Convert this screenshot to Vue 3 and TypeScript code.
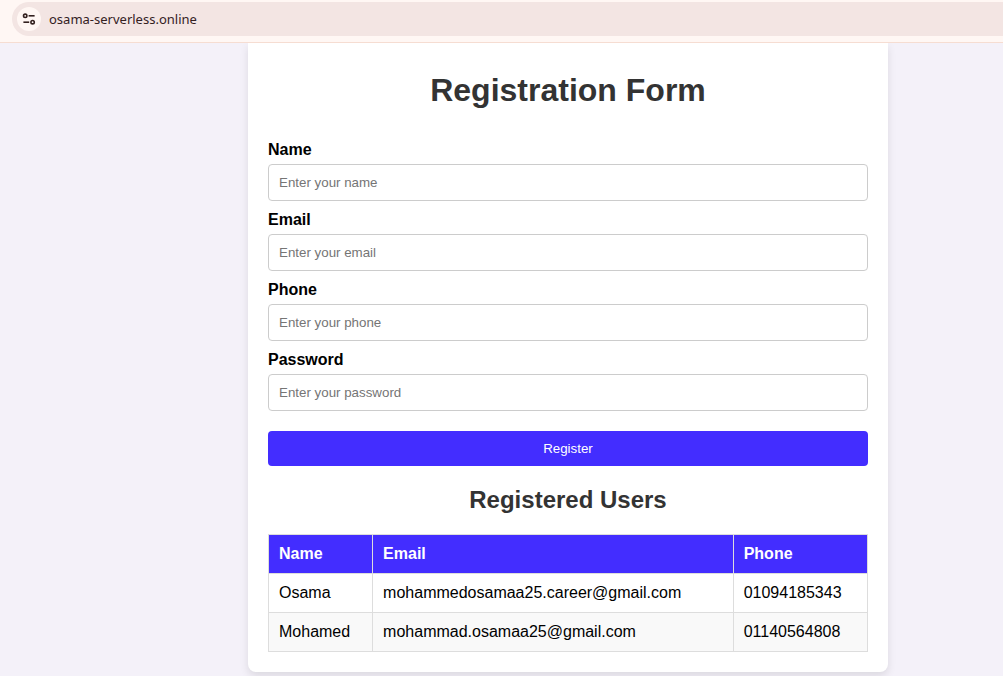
<script setup lang="ts">
import { reactive, ref } from 'vue'

type FieldKey = 'name' | 'email' | 'phone' | 'password'

interface Field {
  key: FieldKey
  label: string
  type: string
}

interface User {
  name: string
  email: string
  phone: string
}

const fields: Field[] = [
  { key: 'name', label: 'Name', type: 'text' },
  { key: 'email', label: 'Email', type: 'email' },
  { key: 'phone', label: 'Phone', type: 'tel' },
  { key: 'password', label: 'Password', type: 'password' },
]

const form = reactive<Record<FieldKey, string>>({ name: '', email: '', phone: '', password: '' })

const users = ref<User[]>([
  { name: 'Osama', email: 'mohammedosamaa25.career@gmail.com', phone: '01094185343' },
  { name: 'Mohamed', email: 'mohammad.osamaa25@gmail.com', phone: '01140564808' },
])

function register(): void {
  if (!form.name || !form.email) return
  users.value.push({ name: form.name, email: form.email, phone: form.phone })
  for (const field of fields) form[field.key] = ''
}
</script>

<template>
  <div class="window">
    <header class="toolbar">
      <div class="address">
        <button class="site-info" type="button" aria-label="View site information">
          <svg width="14" height="14" viewBox="0 0 14 14" fill="none" stroke="#33211f" stroke-width="1.6">
            <circle cx="3.2" cy="3.8" r="1.7" />
            <path d="M6.6 3.8H12.6" />
            <circle cx="10.6" cy="10.2" r="1.7" />
            <path d="M1.4 10.2H7.2" />
          </svg>
        </button>
        <span class="url">osama-serverless.online</span>
      </div>
    </header>

    <main class="page">
      <section class="card">
        <h1>Registration Form</h1>
        <form novalidate @submit.prevent="register">
          <div v-for="field in fields" :key="field.key" class="field">
            <label :for="field.key">{{ field.label }}</label>
            <input
              :id="field.key"
              v-model="form[field.key]"
              :type="field.type"
              :placeholder="`Enter your ${field.key}`"
            />
          </div>
          <button class="register" type="submit">Register</button>
        </form>

        <h2>Registered Users</h2>
        <table>
          <thead>
            <tr>
              <th scope="col">Name</th>
              <th scope="col">Email</th>
              <th scope="col">Phone</th>
            </tr>
          </thead>
          <tbody>
            <tr v-for="user in users" :key="user.email">
              <td>{{ user.name }}</td>
              <td>{{ user.email }}</td>
              <td>{{ user.phone }}</td>
            </tr>
          </tbody>
        </table>
      </section>
    </main>
  </div>
</template>

<style>
body {
  margin: 0;
  background: #f4f1f9;
}
</style>

<style scoped>
.window {
  display: flex;
  flex-direction: column;
  min-height: 100vh;
  font-family: "Liberation Sans", Arial, sans-serif;
  font-size: 16px;
  line-height: 18px;
  color: #000;
}

.toolbar {
  position: relative;
  z-index: 1;
  padding: 2px 0 6px 12px;
  background: #fff7f4;
  border-bottom: 1px solid #f6ddd2;
}

.address {
  display: flex;
  align-items: center;
  gap: 8px;
  height: 34px;
  padding-left: 5px;
  border-radius: 17px 0 0 17px;
  background: #f3e5e3;
}

.site-info {
  display: flex;
  align-items: center;
  justify-content: center;
  width: 24px;
  height: 24px;
  padding: 0;
  border: 0;
  border-radius: 50%;
  background: #fff7f4;
}

.url {
  font-family: "Noto Sans", sans-serif;
  font-size: 13px;
  line-height: 20px;
  color: #33211f;
}

.page {
  flex: 1;
  padding: 0 20px 4px 248px;
}

.card {
  box-sizing: border-box;
  max-width: 640px;
  padding: 29px 20px 20px;
  border-radius: 0 0 8px 8px;
  background: #fff;
  box-shadow: 0 4px 8px rgba(0, 0, 0, 0.1);
}

h1,
h2 {
  text-align: center;
  color: #333;
}

h1 {
  margin: 0 0 32px;
  font-size: 32px;
  line-height: 37px;
}

h2 {
  margin: 20px 0;
  font-size: 24px;
  line-height: 28px;
}

form {
  display: flex;
  flex-direction: column;
  gap: 10px;
}

.field {
  display: flex;
  flex-direction: column;
  gap: 5px;
}

label {
  font-weight: bold;
}

input {
  box-sizing: border-box;
  width: 100%;
  height: 37px;
  padding: 10px;
  border: 1px solid #ccc;
  border-radius: 4px;
  background: #fff;
  font-family: inherit;
}

input::placeholder {
  color: #757575;
}

.register {
  height: 35px;
  margin-top: 10px;
  border: 0;
  border-radius: 4px;
  background: #432dff;
  color: #fff;
  font-family: inherit;
  cursor: pointer;
}

table {
  width: 100%;
  border-collapse: collapse;
}

th,
td {
  padding: 10px;
  border: 1px solid #ddd;
  text-align: left;
}

th {
  background: #432dff;
  color: #fff;
}

tbody tr:nth-child(even) {
  background: #f9f9f9;
}
</style>
